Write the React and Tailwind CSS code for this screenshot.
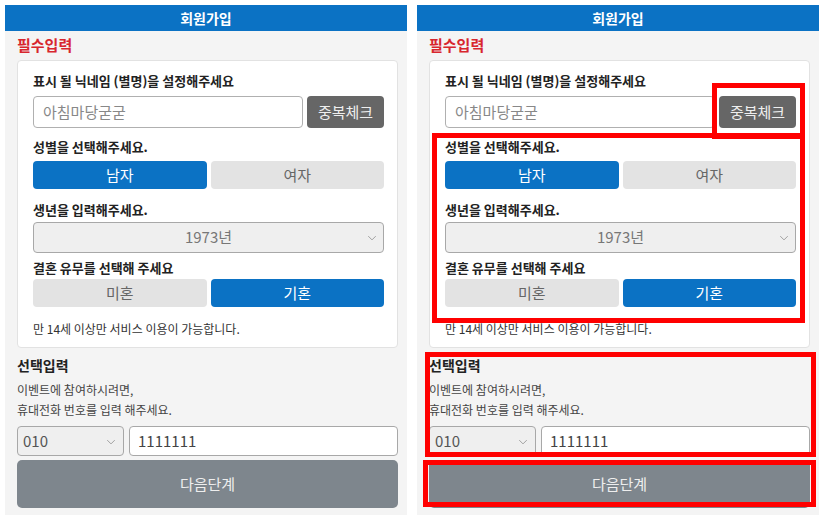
import React from "react";

const font = { fontFamily: '"Noto Sans CJK KR", "Noto Sans", sans-serif' };

const Chevron = ({ className }) => (
  <svg viewBox="0 0 12 8" className={className} fill="none" stroke="currentColor" strokeWidth="1.2">
    <path d="M1 1.5l5 5 5-5" />
  </svg>
);

const Toggle = ({ left, right, active }) => (
  <div className="mt-[5px] flex gap-[4px]">
    {[left, right].map((label, i) => (
      <button
        key={label}
        className={`h-[28px] flex-1 rounded-[4px] text-[15px] ${
          active === i ? "bg-[#0b72c4] text-white" : "bg-[#e3e3e3] text-[#666]"
        }`}
      >
        {label}
      </button>
    ))}
  </div>
);

const Label = ({ children, className = "" }) => (
  <div className={`text-[13px] font-bold leading-[18px] text-[#222] ${className}`}>{children}</div>
);

const SignupPanel = ({ highlight }) => (
  <div className="relative h-[510px] w-[402px] bg-[#f4f4f4]">
    <div className="flex h-[26px] items-center justify-center bg-[#0b72c4] text-[14px] font-bold text-white">
      회원가입
    </div>

    <div className="pl-[12px] pr-[9px]">
      <div className="flex h-[29px] items-center text-[15px] font-bold text-[#d8262e]">필수입력</div>

      {/* required card */}
      <div className="rounded-[4px] border border-[#e2e2e2] bg-white pb-[10px] pl-[15px] pr-[13px] pt-[11px]">
        <Label>표시 될 닉네임 (별명)을 설정해주세요</Label>
        <div className="mt-[6px] flex h-[32px] gap-[4px]">
          <div className="flex flex-1 items-center rounded-[4px] border border-[#b0b0b0] px-[9px] text-[15px] text-[#888]">
            아침마당굳굳
          </div>
          <button className="w-[77px] rounded-[4px] bg-[#666666] text-[15px] text-[#eee]">중복체크</button>
        </div>

        <Label className="mt-[10px]">성별을 선택해주세요.</Label>
        <Toggle left="남자" right="여자" active={0} />

        <Label className="mt-[12px]">생년을 입력해주세요.</Label>
        <div className="relative mt-[3px] flex h-[31px] items-center justify-center rounded-[4px] border border-[#a8a8a8] bg-[#efefef] text-[15px] text-[#777]">
          1973년
          <Chevron className="absolute right-[6px] top-[12px] h-[6px] w-[10px] text-[#999]" />
        </div>

        <Label className="mt-[6px]">결혼 유무를 선택해 주세요</Label>
        <div className="-mt-[3px]">
          <Toggle left="미혼" right="기혼" active={1} />
        </div>

        <div className="mt-[14px] text-[12px] leading-[16px] text-[#333]">만 14세 이상만 서비스 이용이 가능합니다.</div>
      </div>

      {/* optional section */}
      <div className="mt-[7px] text-[14px] font-bold leading-[20px] text-[#222]">선택입력</div>
      <div className="mt-[5px] text-[12px] leading-[20px] text-[#444]">
        이벤트에 참여하시려면,
        <br />
        휴대전화 번호를 입력 해주세요.
      </div>
      <div className="mt-[6px] flex h-[30px] gap-[5px]">
        <div className="relative flex w-[107px] items-center rounded-[4px] border border-[#a8a8a8] bg-[#efefef] pl-[5px] text-[15px] text-[#555]">
          010
          <Chevron className="absolute right-[7px] top-[12px] h-[6px] w-[10px] text-[#999]" />
        </div>
        <div className="flex flex-1 items-center rounded-[4px] border border-[#a8a8a8] bg-white pl-[8px] text-[15px] text-[#444]">
          1111111
        </div>
      </div>
      <button className="mt-[4px] flex h-[48px] w-full items-center justify-center rounded-[5px] bg-[#7e868d] text-[15px] text-[#eee]">
        다음단계
      </button>
    </div>

    {highlight && (
      <>
        <div className="absolute left-[295px] top-[78px] h-[56px] w-[93px] border-[5px] border-[#ff0000]" />
        <div className="absolute left-[15px] top-[128px] h-[190px] w-[373px] border-[5px] border-[#ff0000]" />
        <div className="absolute left-[8px] top-[347px] h-[105px] w-[391px] border-[5px] border-[#ff0000]" />
        <div className="absolute left-[6px] top-[455px] h-[47px] w-[393px] border-[5px] border-[#ff0000]" />
      </>
    )}
  </div>
);

export default function App() {
  return (
    <div className="flex h-[527px] w-[823px] gap-[10px] bg-white pl-[5px] pt-[5px]" style={font}>
      <SignupPanel />
      <SignupPanel highlight />
    </div>
  );
}
